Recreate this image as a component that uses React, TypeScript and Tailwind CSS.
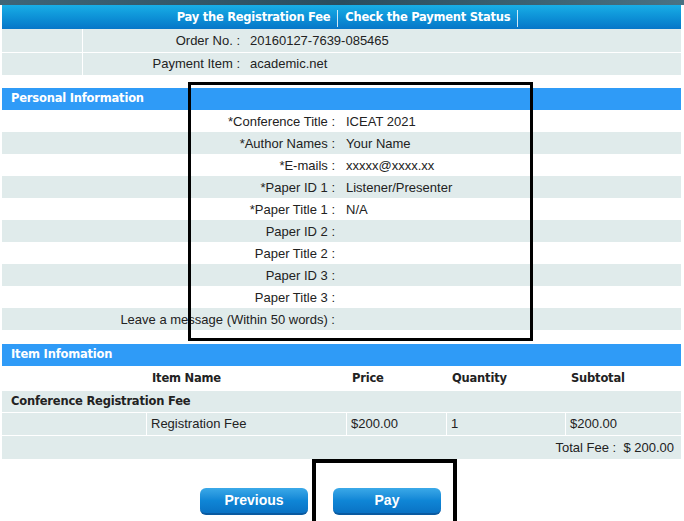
import React from "react"

const personal: [string, string][] = [
    ["*Conference Title :", "ICEAT 2021"],
    ["*Author Names :", "Your Name"],
    ["*E-mails :", "xxxxx@xxxx.xx"],
    ["*Paper ID 1 :", "Listener/Presenter"],
    ["*Paper Title 1 :", "N/A"],
    ["Paper ID 2 :", ""],
    ["Paper Title 2 :", ""],
    ["Paper ID 3 :", ""],
    ["Paper Title 3 :", ""],
    ["Leave a message (Within 50 words) :", ""],
]

function SectionHeader({ title }: { title: string }) {
    return (
        <div className="h-[22px] bg-[#2f9bf7] text-white font-bold text-[11.5px] pl-[9px] flex items-center font-['DejaVu_Sans'] tracking-[-0.2px]">
            {title}
        </div>
    )
}

function BlueButton({ label }: { label: string }) {
    return (
        <button className="w-[108px] h-[27px] rounded-[6px] bg-gradient-to-b from-[#3aa9e8] via-[#0f86d6] to-[#0a72c4] border-b-2 border-[#0a5aa0] text-white font-bold text-[14px] font-['Liberation_Sans'] flex items-center justify-center">
            {label}
        </button>
    )
}

export default function App() {
    return (
        <div className="relative w-[684px] h-[521px] overflow-hidden bg-white text-[#222] text-[13px] font-['Liberation_Sans',sans-serif]">
            <div className="h-[5px] bg-gradient-to-r from-[#3f6577] via-[#2a4d5e] to-[#4a7283]" />
            <div className="pl-[2px] w-[681px]">
                {/* nav bar */}
                <div className="h-[24px] pt-[2px] bg-gradient-to-b from-[#19aee6] to-[#0776c8] flex items-center justify-center text-white font-bold text-[11.5px] font-['DejaVu_Sans'] tracking-[-0.25px] pl-[12px]">
                    <span>Pay the Registration Fee</span>
                    <span className="mx-[7px] w-px h-[17px] bg-white/80" />
                    <span>Check the Payment Status</span>
                    <span className="ml-[7px] w-px h-[17px] bg-white/80" />
                </div>

                {/* order info */}
                <div className="bg-[#e0ebeb]">
                    <div className="flex h-[24px] border-b border-white">
                        <div className="w-[81px] border-r border-white" />
                        <div className="w-[162px] text-right pr-[5px] flex items-center justify-end">Order No. :</div>
                        <div className="pl-[5px] flex items-center">20160127-7639-085465</div>
                    </div>
                    <div className="flex h-[22px]">
                        <div className="w-[81px] border-r border-white" />
                        <div className="w-[162px] text-right pr-[5px] flex items-center justify-end">Payment Item :</div>
                        <div className="pl-[5px] flex items-center">academic.net</div>
                    </div>
                </div>

                <div className="h-[13px]" />

                <SectionHeader title="Personal Information" />
                <div>
                    {personal.map(([label, value], i) => (
                        <div key={label} className={`flex h-[22px] pt-[2px] ${i % 2 === 1 ? "bg-[#e0ebeb]" : "bg-white"}`}>
                            <div className="w-[336px] text-right pr-[3px] flex items-center justify-end">{label}</div>
                            <div className="pl-[8px] flex items-center">{value}</div>
                        </div>
                    ))}
                </div>

                <div className="h-[14px]" />

                <SectionHeader title="Item Infomation" />
                <div className="flex h-[25px] font-bold font-['DejaVu_Sans'] text-[11.5px] tracking-[-0.2px] items-center">
                    <div className="w-[145px]" />
                    <div className="w-[200px] pl-[5px]">Item Name</div>
                    <div className="w-[100px] pl-[5px]">Price</div>
                    <div className="w-[119px] pl-[5px]">Quantity</div>
                    <div className="pl-[5px]">Subtotal</div>
                </div>
                <div className="h-[22px] bg-[#e0ebeb] border-b border-white flex items-center pl-[9px] font-bold font-['DejaVu_Sans'] text-[11.5px] tracking-[-0.2px]">
                    Conference Registration Fee
                </div>
                <div className="flex h-[23px] bg-[#e0ebeb] border-b border-white">
                    <div className="w-[145px] border-r border-white" />
                    <div className="w-[200px] pl-[4px] border-r border-white flex items-center">Registration Fee</div>
                    <div className="w-[100px] pl-[4px] border-r border-white flex items-center">$200.00</div>
                    <div className="w-[119px] pl-[4px] border-r border-white flex items-center">1</div>
                    <div className="pl-[4px] flex items-center">$200.00</div>
                </div>
                <div className="h-[23px] bg-[#e0ebeb] flex items-center justify-end pr-[7px]">
                    Total Fee :&nbsp;&nbsp;$ 200.00
                </div>

                <div className="flex justify-center gap-[25px] pt-[29px] pr-[42px]">
                    <BlueButton label="Previous" />
                    <BlueButton label="Pay" />
                </div>
            </div>

            {/* annotation boxes */}
            <div className="absolute left-[188px] top-[82px] w-[345px] h-[259px] border-[3px] border-black" />
            <div className="absolute left-[312px] top-[459px] w-[145px] h-[80px] border-[4px] border-black" />
        </div>
    )
}
